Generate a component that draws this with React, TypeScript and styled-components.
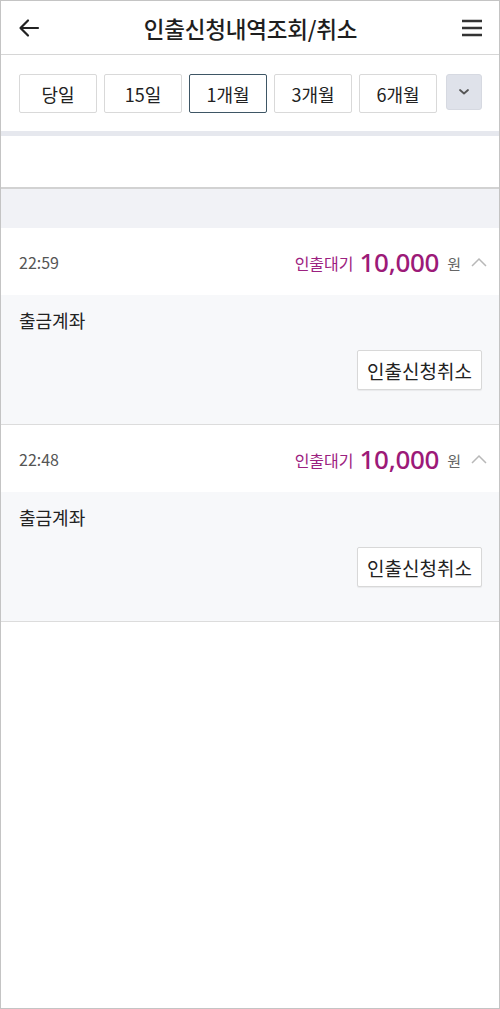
import React from "react";
import styled, { createGlobalStyle } from "styled-components";

const GlobalStyle = createGlobalStyle`
  html, body {
    margin: 0;
    padding: 0;
    background: #fff;
  }
  body {
    font-family: "Noto Sans CJK KR", "Noto Sans", sans-serif;
    color: #222;
  }
  * { box-sizing: border-box; }
`;

const periods = ["당일", "15일", "1개월", "3개월", "6개월"];

const items = [
  { time: "22:59", status: "인출대기", amount: "10,000" },
  { time: "22:48", status: "인출대기", amount: "10,000" },
];

const BackIcon = () => (
  <svg width="22" height="22" viewBox="0 0 22 22" fill="none">
    <path d="M20 11H3M10 3.5L2.5 11L10 18.5" stroke="#222" strokeWidth="2.2" strokeLinecap="round" strokeLinejoin="round" />
  </svg>
);

const MenuIcon = () => (
  <svg width="22" height="20" viewBox="0 0 22 20" fill="none">
    <path d="M1 3h20M1 10h20M1 17h20" stroke="#333" strokeWidth="2.4" />
  </svg>
);

const ChevronDown = () => (
  <svg width="12" height="8" viewBox="0 0 12 8" fill="none">
    <path d="M2 2l4 3.5L10 2" stroke="#555" strokeWidth="1.8" strokeLinecap="round" strokeLinejoin="round" />
  </svg>
);

const ChevronUp = () => (
  <svg width="16" height="10" viewBox="0 0 16 10" fill="none">
    <path d="M1 9l7-7 7 7" stroke="#b8b8b8" strokeWidth="1.5" />
  </svg>
);

export default function App() {
  return (
    <Frame>
      <GlobalStyle />
      <Header>
        <IconButton>
          <BackIcon />
        </IconButton>
        <Title>인출신청내역조회/취소</Title>
        <IconButton>
          <MenuIcon />
        </IconButton>
      </Header>
      <PeriodBar>
        {periods.map((p) => (
          <PeriodButton key={p} $active={p === "1개월"}>
            {p}
          </PeriodButton>
        ))}
        <MoreButton>
          <ChevronDown />
        </MoreButton>
      </PeriodBar>
      <Strip />
      <Blank />
      <Gap />
      {items.map((it, i) => (
        <Item key={i}>
          <ItemHead>
            <Time>{it.time}</Time>
            <Right>
              <Status>{it.status}</Status>
              <Amount>{it.amount}</Amount>
              <Won>원</Won>
              <ChevronUp />
            </Right>
          </ItemHead>
          <ItemBody>
            <Label>출금계좌</Label>
            <Actions>
              <CancelButton>인출신청취소</CancelButton>
            </Actions>
          </ItemBody>
        </Item>
      ))}
    </Frame>
  );
}

const Frame = styled.div`
  width: 500px;
  height: 1009px;
  border: 1px solid #c4c4c4;
  background: #fff;
  overflow: hidden;
`;

const Header = styled.header`
  height: 54px;
  display: flex;
  align-items: center;
  justify-content: space-between;
  padding: 0 15px 0 16px;
  border-bottom: 1px solid #d6d6d6;
`;

const IconButton = styled.div`
  width: 24px;
  height: 24px;
  display: flex;
  align-items: center;
  justify-content: center;
`;

const Title = styled.h1`
  margin: 0;
  font-size: 22.5px;
  font-weight: 500;
  color: #1e1e1e;
  letter-spacing: -0.2px;
`;

const PeriodBar = styled.div`
  display: flex;
  align-items: flex-start;
  gap: 6px;
  padding: 19px 17px 18px 18px;
`;

const PeriodButton = styled.button<{ $active?: boolean }>`
  flex: 1;
  height: 39px;
  margin-right: 1px;
  background: #fff;
  border: 1px solid ${(p) => (p.$active ? "#3e5665" : "#d9d9d9")};
  border-radius: 2px;
  font-family: inherit;
  font-size: 18px;
  color: #222;
  padding: 0;
`;

const MoreButton = styled.button`
  width: 36px;
  flex: 0 0 36px;
  height: 36px;
  margin-left: 2px;
  background: #dfe2ea;
  border: 1px solid #d6d9e1;
  border-radius: 3px;
  display: flex;
  align-items: center;
  justify-content: center;
  padding: 0;
`;

const Strip = styled.div`
  height: 5px;
  background: #e6e8ee;
`;

const Blank = styled.div`
  height: 53px;
  border-bottom: 2px solid #d2d2d2;
`;

const Gap = styled.div`
  height: 39px;
  background: #f1f2f6;
`;

const Item = styled.section`
  border-bottom: 1px solid #dcdcdc;
`;

const ItemHead = styled.div`
  height: 67px;
  display: flex;
  align-items: center;
  justify-content: space-between;
  padding: 0 12px 0 18px;
  background: #fff;
`;

const Time = styled.span`
  font-size: 16px;
  color: #555;
`;

const Right = styled.div`
  display: flex;
  align-items: center;
`;

const Status = styled.span`
  font-size: 16px;
  color: #9c2180;
  margin-right: 6px;
  margin-top: 3px;
`;

const Amount = styled.span`
  font-size: 26px;
  font-weight: 500;
  color: #9c1a78;
  font-family: "Noto Sans", sans-serif;
  letter-spacing: -0.3px;
`;

const Won = styled.span`
  font-size: 15px;
  color: #666;
  margin: 3px 10px 0 8px;
`;

const ItemBody = styled.div`
  height: 129px;
  background: #f7f8fa;
  padding: 12px 17px 0 18px;
`;

const Label = styled.div`
  font-size: 18px;
  color: #222;
`;

const Actions = styled.div`
  display: flex;
  justify-content: flex-end;
  margin-top: 17px;
`;

const CancelButton = styled.button`
  width: 125px;
  height: 40px;
  background: #fff;
  border: 1px solid #d8d8d8;
  border-radius: 2px;
  box-shadow: 0 1px 1px rgba(0, 0, 0, 0.06);
  font-family: inherit;
  font-size: 19px;
  color: #222;
  padding: 0;
`;
